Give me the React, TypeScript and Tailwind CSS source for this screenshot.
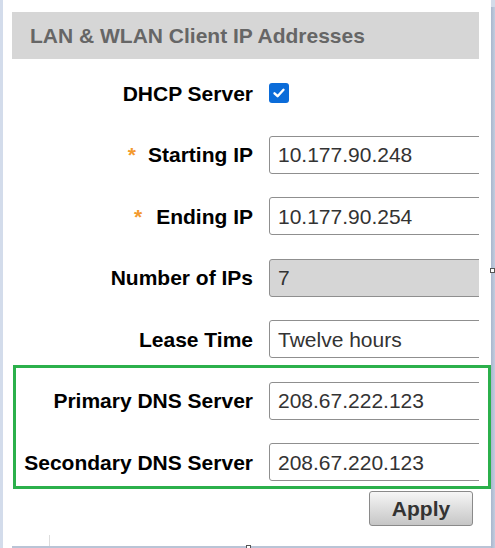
import React from "react";

const font = { fontFamily: '"Liberation Sans", Arial, sans-serif' };

function Row({
  label,
  star,
  starGap,
  children,
}: {
  label: string;
  star?: boolean;
  starGap?: string;
  children: React.ReactNode;
}) {
  return (
    <div className="flex items-center h-[38px]">
      <div className="w-[241px] shrink-0 text-right text-[21px] font-bold text-black leading-none whitespace-nowrap">
        {star && <span className={`text-[#f39a2e] font-bold ${starGap ?? "mr-[12px]"}`}>*</span>}
        {label}
      </div>
      <div className="ml-[16px] shrink-0">{children}</div>
    </div>
  );
}

function Field({ value, disabled }: { value: string; disabled?: boolean }) {
  return (
    <div
      className={`w-[240px] h-[38px] border border-[#8f8f8f] rounded-[3px] flex items-center pl-[8px] text-[21px] text-[#333] leading-none ${
        disabled ? "bg-[#d6d6d6]" : "bg-white"
      }`}
    >
      {value}
    </div>
  );
}

export default function App() {
  return (
    <div className="relative w-[495px] h-[548px] bg-white flex overflow-hidden" style={font}>
      <div className="w-[3px] shrink-0 bg-[#d3dceb]" />
      <div className="flex-1 flex flex-col pt-[12px]">
        <div className="ml-[9px] w-[467px] overflow-hidden flex flex-col">
          <div className="h-[47px] bg-[#d6d6d6] flex items-center pl-[18px] text-[21px] font-bold text-[#666] leading-none">
            LAN &amp; WLAN Client IP Addresses
          </div>
          <div className="flex flex-col gap-[23.5px] mt-[15px]">
            <Row label="DHCP Server">
              <div className="w-[20px] h-[20px] rounded-[3px] bg-[#0b6cd9] flex items-center justify-center">
                <svg width="14" height="14" viewBox="0 0 14 14">
                  <path d="M2.5 7.3 L5.6 10.2 L11.5 3.8" fill="none" stroke="white" strokeWidth="2.4" strokeLinecap="round" strokeLinejoin="round" />
                </svg>
              </div>
            </Row>
            <Row label="Starting IP" star starGap="mr-[12px]">
              <Field value="10.177.90.248" />
            </Row>
            <Row label="Ending IP" star starGap="mr-[14px]">
              <Field value="10.177.90.254" />
            </Row>
            <Row label="Number of IPs">
              <Field value="7" disabled />
            </Row>
            <Row label="Lease Time">
              <Field value="Twelve hours" />
            </Row>
            <Row label="Primary DNS Server">
              <Field value="208.67.222.123" />
            </Row>
            <Row label="Secondary DNS Server">
              <Field value="208.67.220.123" />
            </Row>
          </div>
          <div className="flex justify-end mt-[10px] mr-[6px]">
            <button className="w-[104px] h-[35px] border border-[#8a8a8a] rounded-[3px] bg-gradient-to-b from-[#f6f6f6] to-[#c6c6c6] text-[21px] font-bold text-[#333] leading-none flex items-center justify-center">
              Apply
            </button>
          </div>
        </div>
        <div className="flex-1" />
        <div className="h-[2px] ml-[9px] bg-[#b9c4d6]" />
      </div>
      <div className="w-[4px] shrink-0 flex flex-col">
        <div className="h-[7px] bg-[#d3dbe9]" />
        <div className="flex-1 bg-gradient-to-r from-[#a9b6cc] to-[#c3cde0]" />
      </div>
      <div className="absolute left-[13px] top-[365px] w-[478px] h-[124px] border-[3px] border-[#2bb04b] pointer-events-none" />
      <div className="absolute left-[49px] top-[535px] w-[1px] h-[11px] bg-[#dddddd]" />
      <div className="absolute left-[246px] top-[545px] w-[5px] h-[4px] border border-[#555] bg-white" />
      <div className="absolute left-[490px] top-[268px] w-[5px] h-[5px] border border-[#555] bg-white" />
    </div>
  );
}
